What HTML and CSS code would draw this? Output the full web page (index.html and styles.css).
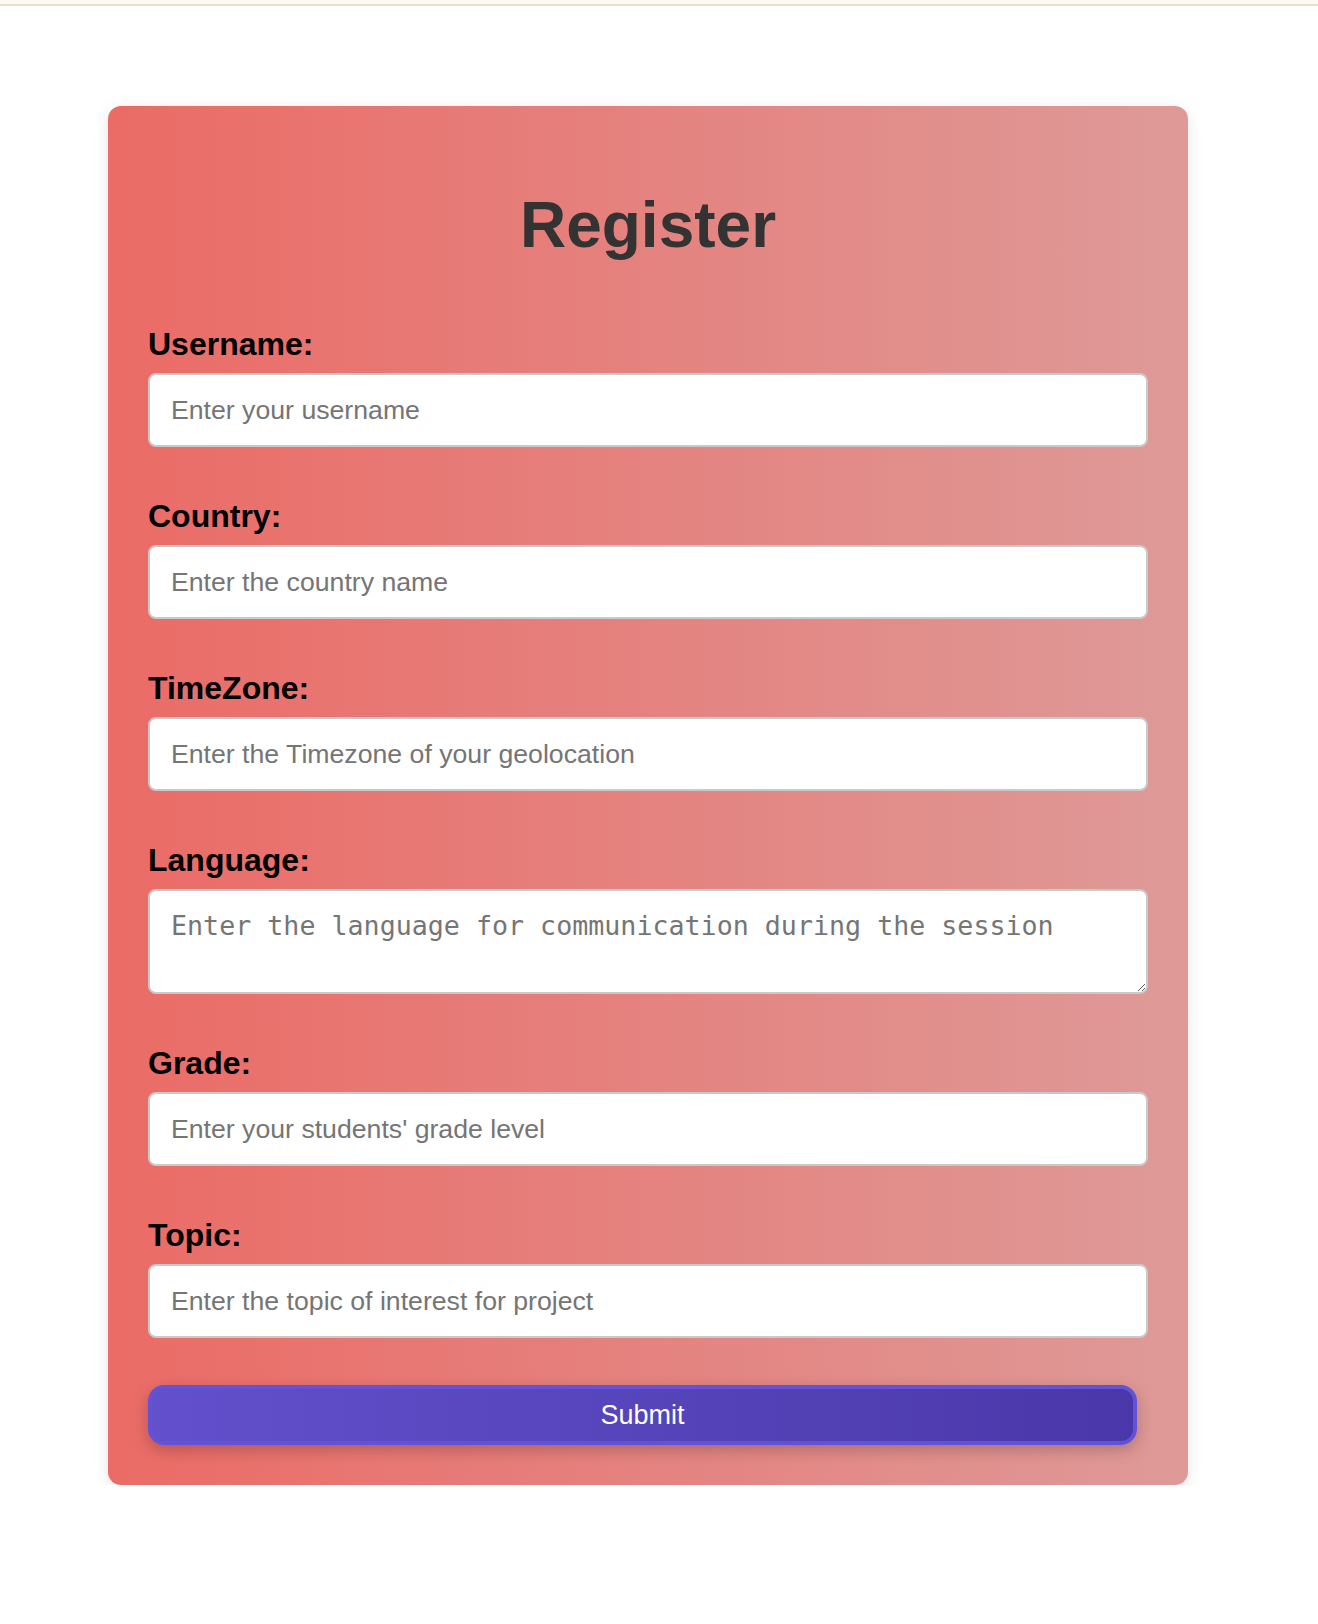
FILE: index.html
```html
<!DOCTYPE html>
<html lang="en">
<head>
<meta charset="utf-8">
<title>Register</title>
<link rel="stylesheet" href="styles.css">
</head>
<body>
<div class="topbar"></div>
<main class="page">
  <section class="card">
    <h1 class="title">Register</h1>
    <form class="form">
      <div class="group">
        <label class="label" for="username">Username:</label>
        <input class="field" id="username" type="text" placeholder="Enter your username">
      </div>
      <div class="group">
        <label class="label" for="country">Country:</label>
        <input class="field" id="country" type="text" placeholder="Enter the country name">
      </div>
      <div class="group">
        <label class="label" for="timezone">TimeZone:</label>
        <input class="field" id="timezone" type="text" placeholder="Enter the Timezone of your geolocation">
      </div>
      <div class="group">
        <label class="label" for="language">Language:</label>
        <textarea class="field area" id="language" placeholder="Enter the language for communication during the session"></textarea>
      </div>
      <div class="group">
        <label class="label" for="grade">Grade:</label>
        <input class="field" id="grade" type="text" placeholder="Enter your students' grade level">
      </div>
      <div class="group last">
        <label class="label" for="topic">Topic:</label>
        <input class="field" id="topic" type="text" placeholder="Enter the topic of interest for project">
      </div>
      <button class="submit" type="submit">Submit</button>
    </form>
  </section>
</main>
</body>
</html>
```
FILE: styles.css
```css
html, body {
  margin: 0;
  padding: 0;
  background: #ffffff;
  font-family: "Liberation Sans", Arial, sans-serif;
}

.topbar {
  height: 4px;
  background: #fdf8f0;
  border-bottom: 2px solid #e8dfcb;
}

.page {
  padding: 100px 0 0 108px;
}

.card {
  width: 1080px;
  box-sizing: border-box;
  padding: 40px;
  border-radius: 13px;
  background: linear-gradient(to right, #eb6b66, #de9a98);
  box-shadow: 0 4px 16px rgba(0, 0, 0, 0.1);
}

.title {
  margin: 42px 0 0;
  font-size: 64px;
  font-weight: bold;
  color: #333333;
  text-align: center;
}

.form {
  display: flex;
  flex-direction: column;
  margin-top: 64px;
}

.group {
  display: flex;
  flex-direction: column;
  margin-bottom: 51px;
}

.group.last {
  margin-bottom: 47px;
}

.label {
  font-size: 32px;
  font-weight: bold;
  color: #000000;
  margin-bottom: 10px;
}

.field {
  box-sizing: border-box;
  width: 1000px;
  height: 74px;
  padding: 0 21px;
  border: 2px solid #c9c9c9;
  border-radius: 8px;
  background: #ffffff;
  font-family: "Liberation Sans", Arial, sans-serif;
  font-size: 26.67px;
  color: #333;
  outline: none;
}

.field::placeholder {
  color: #757575;
}

.area {
  height: 105px;
  padding: 19px 21px;
  font-family: "DejaVu Sans Mono", monospace;
  font-size: 26.67px;
  resize: vertical;
}

.submit {
  box-sizing: border-box;
  width: 989px;
  height: 60px;
  border: 4px solid #6152d6;
  border-radius: 16px;
  background: linear-gradient(to right, #6250cc, #4a38aa);
  color: #ffffff;
  font-family: "Liberation Sans", Arial, sans-serif;
  font-size: 27px;
  box-shadow: 0 5px 15px rgba(0, 0, 0, 0.22);
  cursor: pointer;
}
```
